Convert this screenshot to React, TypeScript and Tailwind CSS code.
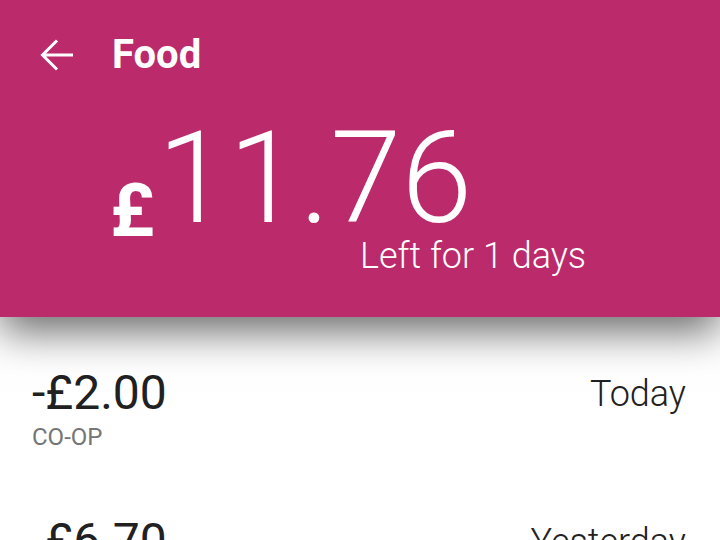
export default function App() {
  const items = [
    { amount: "-£2.00", shop: "CO-OP", when: "Today" },
    { amount: "-£6.70", shop: "TESCO", when: "Yesterday" },
  ];

  return (
    <div className="h-[540px] w-[720px] overflow-hidden bg-white font-['Roboto',sans-serif]">
      <header className="relative z-10 h-[317px] bg-[#bb2a6b] shadow-[0_14px_40px_rgba(0,0,0,0.6)]">
        <div className="flex items-center pl-[40px] pt-[35px]">
          <svg width="34" height="32" viewBox="0 0 34 32" className="shrink-0">
            <path d="M2 16H33M17 1.5L2.5 16L17 30.5" fill="none" stroke="white" strokeWidth="3" />
          </svg>
          <h1 className="ml-[38px] text-[40px] leading-none font-bold text-white">Food</h1>
        </div>

        <div className="ml-[110px] mt-[39px] text-white">
          <div className="flex items-start">
            <span className="mt-[59px] text-[75px] leading-none font-bold">£</span>
            <span className="ml-[3px] text-[128px] leading-none font-light">11.76</span>
          </div>
          <p className="-mt-[10px] ml-[250px] text-[36px] leading-none font-light">Left for 1 days</p>
        </div>
      </header>

      <ul>
        {items.map((it) => (
          <li key={it.when} className="flex items-start justify-between pl-[32px] pr-[34px] pt-[52px] pb-[16px]">
            <div>
              <div className="text-[48px] leading-none text-[#212121]">{it.amount}</div>
              <div className="mt-[8px] text-[24px] leading-none text-[#757575]">{it.shop}</div>
            </div>
            <div className="mt-[7px] text-[36px] leading-none font-light text-[#212121]">{it.when}</div>
          </li>
        ))}
      </ul>
    </div>
  );
}
